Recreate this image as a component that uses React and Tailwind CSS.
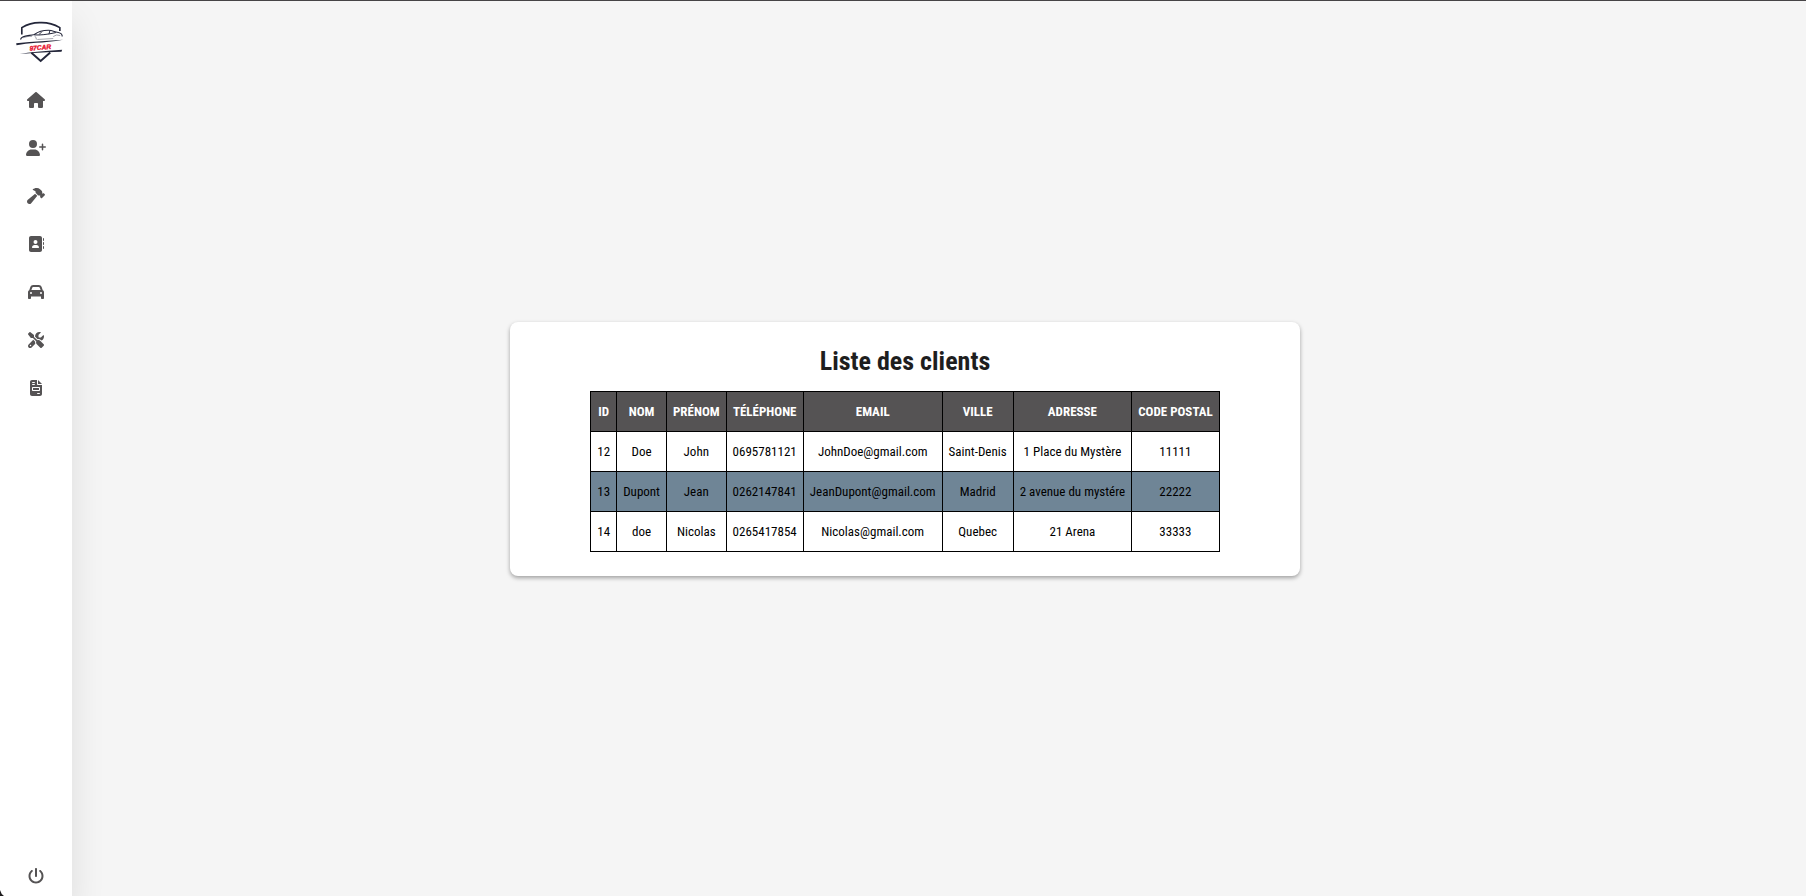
import {
  FaHouse,
  FaUserPlus,
  FaHammer,
  FaAddressBook,
  FaCar,
  FaScrewdriverWrench,
  FaFileInvoice,
  FaPowerOff,
} from "react-icons/fa6";

const links = [
  { label: "Accueil", Icon: FaHouse },
  { label: "Ajouter un client", Icon: FaUserPlus },
  { label: "Ajouter une réparation", Icon: FaHammer },
  { label: "Liste des clients", Icon: FaAddressBook },
  { label: "Véhicules", Icon: FaCar },
  { label: "Réparations", Icon: FaScrewdriverWrench },
  { label: "Factures", Icon: FaFileInvoice },
];

const columns = ["ID", "NOM", "PRÉNOM", "TÉLÉPHONE", "EMAIL", "VILLE", "ADRESSE", "CODE POSTAL"];

const clients = [
  ["12", "Doe", "John", "0695781121", "JohnDoe@gmail.com", "Saint-Denis", "1 Place du Mystère", "11111"],
  ["13", "Dupont", "Jean", "0262147841", "JeanDupont@gmail.com", "Madrid", "2 avenue du mystére", "22222"],
  ["14", "doe", "Nicolas", "0265417854", "Nicolas@gmail.com", "Quebec", "21 Arena", "33333"],
];

function Logo() {
  return (
    <svg viewBox="48 60 144 130" className="h-[43px] w-12" role="img" aria-label="97CAR">
      <g fill="none" stroke="#23263a">
        <path d="M65 104V83Q92 67 122 68Q152 67 180 83V93" strokeWidth="5" />
        <path d="M94 159L122 184L151 158" strokeWidth="6" />
        <path d="M61 119C64 108 76 109 103 104C116 94 128 91 145 91C158 91 164 96 172 97C184 99 188 103 187 110" strokeWidth="3.5" />
        <path d="M103 105Q128 107 168 98M150 92L147 103M117 104L126 95" strokeWidth="3" />
        <path d="M103 108Q110 112 109 119M68 114Q80 109 96 109M160 110Q170 102 181 107" strokeWidth="2" opacity=".65" />
        <path d="M112 119L160 116" strokeWidth="2" opacity=".6" />
      </g>
      <path d="M48 130Q90 125 124 124L190 120Q145 128 108 129Q75 131 49 136Z" fill="#23263a" />
      <path d="M59 163Q100 155 187 150L185 156Q140 157 100 160Z" fill="#23263a" />
      <text
        x="121"
        y="150"
        textAnchor="middle"
        transform="rotate(-5 121 144)"
        fill="#e8112d"
        stroke="#e8112d"
        strokeWidth="1"
        className="font-['Liberation_Sans',sans-serif] text-[20px] font-bold italic"
      >
        97CAR
      </text>
    </svg>
  );
}

function NavLink({ label, Icon }) {
  return (
    <a href="#" aria-label={label} className="flex h-12 w-full items-center justify-center text-[#555354]">
      <Icon className="h-4 w-5" />
    </a>
  );
}

export default function App() {
  return (
    <div className="flex min-h-screen overflow-hidden border-t border-[#464446] bg-[#f5f5f5] font-['Roboto_Condensed',Roboto,sans-serif] text-black">
      <aside className="relative flex w-[72px] shrink-0 flex-col bg-white pt-[19px] shadow-[0_20px_35px_rgba(0,0,0,0.1)]">
        <a href="#" className="ml-4 flex h-14 items-start">
          <Logo />
        </a>
        <nav className="flex flex-1 flex-col">
          {links.map((link) => (
            <NavLink key={link.label} {...link} />
          ))}
        </nav>
        <button type="button" aria-label="Déconnexion" className="mb-3 flex h-4 w-full items-center justify-center text-[#555354]">
          <FaPowerOff className="size-4" />
        </button>
        <svg viewBox="0 0 4 6" className="absolute bottom-0 left-0 h-1.5 w-1" aria-hidden="true">
          <path d="M0 0Q1 4 4 6H0Z" fill="#1d1b1d" />
        </svg>
      </aside>
      <main className="flex flex-1 items-center justify-center pr-[68px]">
        <section className="flex flex-col items-center rounded-lg bg-white px-20 py-6 shadow-[0_2px_4px_rgba(0,0,0,0.35)]">
          <h1 className="mb-[15px] text-[26px] leading-[30px] font-bold text-[#1e1e1e]">Liste des clients</h1>
          <table className="border-collapse text-center text-[13px] leading-[15px] whitespace-nowrap">
            <thead className="bg-[#555354] text-white">
              <tr>
                {columns.map((column) => (
                  <th key={column} scope="col" className="h-10 border border-black px-1.5 font-bold">
                    {column}
                  </th>
                ))}
              </tr>
            </thead>
            <tbody>
              {clients.map((client) => (
                <tr key={client[0]} className="even:bg-[#6f8596]">
                  {client.map((value, index) => (
                    <td key={columns[index]} className="h-10 border border-black px-1.5">
                      {value}
                    </td>
                  ))}
                </tr>
              ))}
            </tbody>
          </table>
        </section>
      </main>
    </div>
  );
}
